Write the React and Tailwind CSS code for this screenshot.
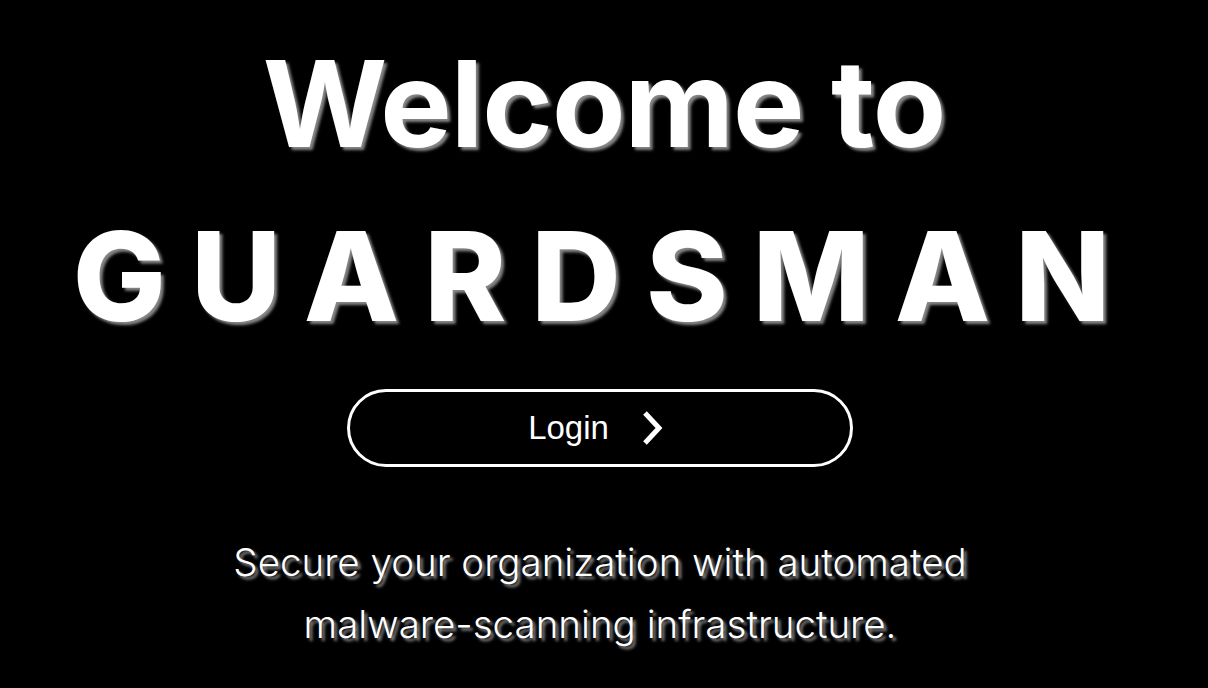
import React from 'react';

const shadow = '[text-shadow:3px_3px_3px_rgba(150,150,150,0.9)]';

const App = () => {
    return (
        <div className="w-full min-h-[688px] bg-black text-white flex flex-col items-center overflow-hidden">
            <h1 className={`mt-[44px] text-[120px] leading-[1] font-bold tracking-[-1px] font-['Inter',sans-serif] ${shadow}`}>
                Welcome to
            </h1>
            <h2 className={`mt-[50px] text-[124px] leading-[1] font-extrabold tracking-[25px] font-['Inter',sans-serif] ${shadow}`}>
                GUARDSMAN
            </h2>
            <button className="mt-[51px] mr-[8px] w-[506px] h-[78px] rounded-full border-[3px] border-white flex items-center justify-center gap-[32px] pr-[9px]">
                <span className="text-[33px] font-['Liberation_Sans',sans-serif] text-white">Login</span>
                <svg width="22" height="36" viewBox="0 0 22 36" fill="none">
                    <path d="M4 3 L18 18 L4 33" stroke="white" strokeWidth="5" strokeLinejoin="miter" />
                </svg>
            </button>
            <p className={`mt-[64px] mr-[8px] text-[38.5px] leading-[62px] font-light text-center font-['Inter',sans-serif] ${shadow}`}>
                Secure your organization with automated
                <br />
                malware-scanning infrastructure.
            </p>
        </div>
    );
};

export default App;
